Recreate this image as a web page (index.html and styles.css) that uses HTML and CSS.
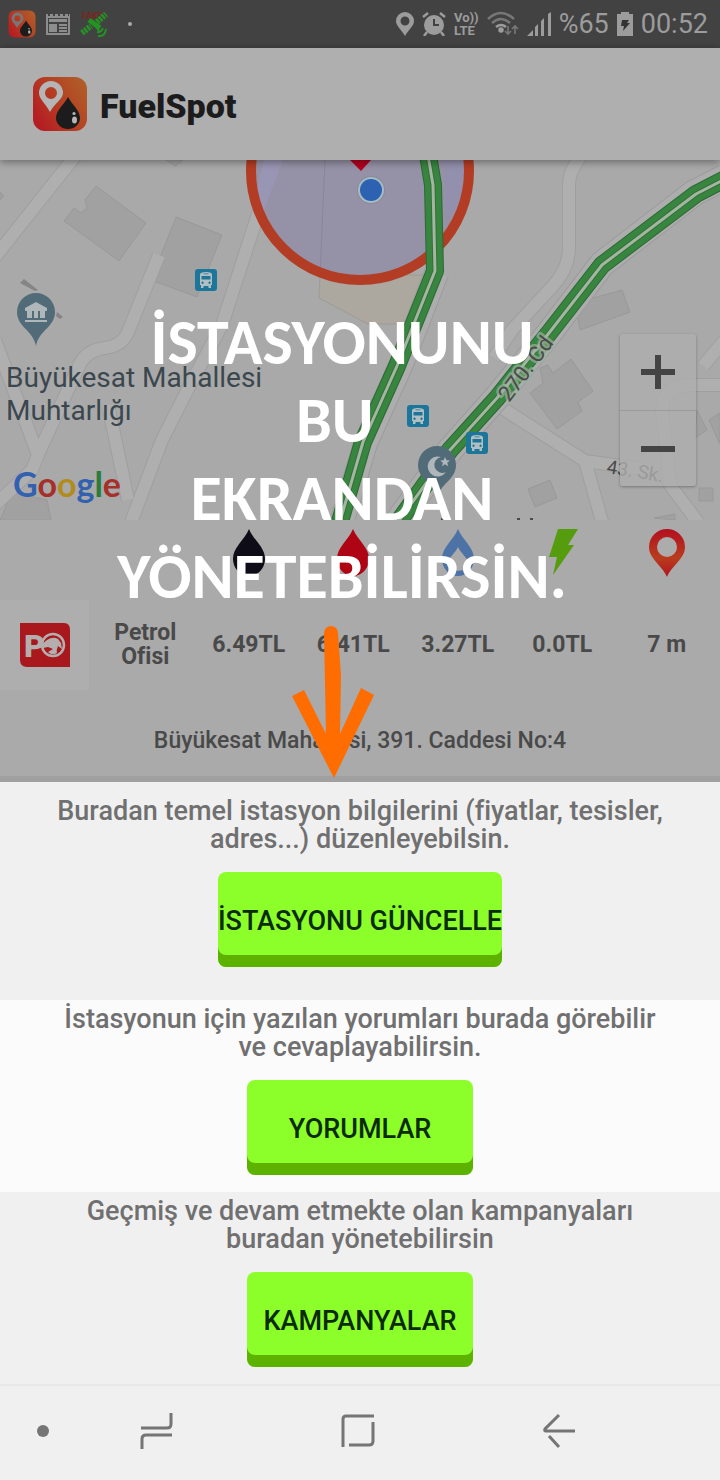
FILE: index.html
```html
<!DOCTYPE html>
<html lang="tr">
<head>
<meta charset="utf-8">
<meta name="viewport" content="width=device-width, initial-scale=1">
<title>FuelSpot</title>
<link rel="stylesheet" href="styles.css">
</head>
<body>
<svg class="defs" aria-hidden="true">
  <defs>
    <linearGradient id="logo-fill" x1="0" y1="0.7" x2="1" y2="0.1">
      <stop offset="0" stop-color="#b51d22"/><stop offset="0.55" stop-color="#b44423"/><stop offset="1" stop-color="#b0602a"/>
    </linearGradient>
    <linearGradient id="pin-fill" x1="0" y1="0" x2="0" y2="1">
      <stop offset="0" stop-color="#b30f20"/><stop offset="0.6" stop-color="#b83c1d"/><stop offset="1" stop-color="#b3141e"/>
    </linearGradient>
    <symbol id="logo" viewBox="0 0 56 56">
      <rect x="1" y="1" width="54" height="54" rx="12" fill="url(#logo-fill)"/>
      <path fill="currentColor" fill-rule="evenodd" d="M19 5a12 12 0 0 0-12 12c0 6 7 11 11 19c4-8 13-13 13-19a12 12 0 0 0-12-12zM19 11a6 6 0 1 1 0 12a6 6 0 0 1 0-12z"/>
      <path fill="#1c1c1c" d="M36 21c4 8 12 13 12 21a12 11 0 0 1-24 0c0-8 8-13 12-21z"/>
      <ellipse cx="42.500" cy="44" rx="2.500" ry="3.500" fill="#b5b5b5"/>
      <circle cx="42" cy="37.500" r="1.600" fill="#b5b5b5"/>
    </symbol>
    <symbol id="bus" viewBox="0 0 22 22">
      <rect width="22" height="22" rx="3" fill="#1c7699"/>
      <path fill="#b3bec2" fill-rule="evenodd" d="M5 5.500Q5 3 11 3Q17 3 17 5.500V16H16V19H13.500V17H8.500V19H6V16H5zM6.500 7V10.500H15.500V7zM7.500 12.500a1.200 1.200 0 1 0 .1 0zM14.500 12.500a1.200 1.200 0 1 0 .1 0zM8.500 4.500V5.300H13.500V4.500z"/>
    </symbol>
  </defs>
</svg>

<div class="screen">
  <div class="hero">
    <div class="status">
      <div class="status-left">
        <svg class="s28 status-logo"><use href="#logo"/></svg>
        <svg class="s24" viewBox="0 0 24 24" fill="#8d8d8d"><path fill-rule="evenodd" d="M0 2h2v2h2V2h3v2h2V2h3v2h2V2h3v2h2V2h3v2h1V2h1v21H0zM2 6v15h20V6z"/><path d="M3 12h8v8H3zM3 7h18v3H3zM13 12h8v2h-8zM13 15h8v2h-8zM13 18h8v2h-8z"/></svg>
        <svg class="s28" viewBox="0 0 28 28"><text x="2" y="9" font-size="9" font-weight="700" fill="#7c2620">FAKE</text><g stroke="#249323" fill="none"><path stroke-width="6" stroke-dasharray="2.500 1" d="M2 23L11 16M17 12L26 4"/><path stroke-width="5" d="M9 10L20 18"/><path stroke-width="2" d="M14 14l6 8M18 26q7 1 8-7M17 22q4 1 6-4"/></g></svg>
        <span class="more-dot"></span>
      </div>
      <div class="status-right">
        <svg class="w18" viewBox="0 0 18 24" fill="#9c9c9c"><path fill-rule="evenodd" d="M9 0a9 9 0 0 0-9 9c0 5 5 8 9 15c4-7 9-10 9-15a9 9 0 0 0-9-9zm0 4.500a4.500 4.500 0 1 1 0 9a4.500 4.500 0 0 1 0-9z"/></svg>
        <svg class="s24" viewBox="0 0 24 24"><circle cx="12" cy="13" r="10" fill="#9c9c9c"/><path d="M1 5l5-4M23 5l-5-4M5 20l-3 4M19 20l3 4" stroke="#9c9c9c" stroke-width="2.500"/><path d="M12 7v6h5" fill="none" stroke="#424242" stroke-width="2"/></svg>
        <span class="volte">Vo))<br>LTE</span>
        <svg class="wifi" viewBox="0 0 32 26" fill="none" stroke="#777" stroke-width="2.500"><path d="M1 8Q14-4 27 8M5 12Q14 4 23 12"/><path stroke="#9c9c9c" d="M9 16q5-4 10 0"/><circle cx="14" cy="19" r="1.500" fill="#9c9c9c" stroke="#9c9c9c"/><path stroke-width="1.600" d="M21 15v8m-3-3l3 3l3-3M28 23v-8m-3 3l3-3l3 3"/></svg>
        <svg class="s24" viewBox="0 0 24 24" fill="#9c9c9c"><path d="M0 24l6-6v6zM8 15l3-3v12H8zM14 9l3-3v18h-3zM21 2l3-2v24h-3z"/></svg>
        <span class="status-text">%65</span>
        <svg class="battery" viewBox="0 0 16 24"><path fill="#9c9c9c" d="M4 0h8v2h4v22H0V2h4z"/><path fill="#333" d="M5 8h7l-2 3h3l-7 8l1-5H4z"/></svg>
        <span class="status-text">00:52</span>
      </div>
    </div>

    <header class="app-bar">
      <svg class="brand-logo" role="img" aria-label="FuelSpot logo"><use href="#logo"/></svg>
      <h1 class="brand">FuelSpot</h1>
    </header>

    <div class="map">
      <svg class="map-canvas" viewBox="0 160 720 360" preserveAspectRatio="xMidYMid slice">
        <rect y="160" width="720" height="360" fill="#a9a9a9"/>
        <g fill="#a1a1a1" stroke="#999">
          <path d="M96 186L146 223L119 261L64 221L74 208L81 213L87 208L85 200zM176 217L222 235L197 297L151 280zM575 303L622 290L630 312L580 330zM540 368L548 365L553 373L571 359L593 391L578 402L582 411L557 429L530 393L543 383zM528 489L550 480L557 498L535 507zM697 410L707 430L695 438zM720 413L709 420L720 444zM699 488h14v13h-14zM654 518l21-4v6zM166 160l9 6l8-6zM0 192l4 4l-4 4zM0 520l12-28l35 8l4 20z"/>
        </g>
        <path d="M20 283l4-4l14 11l-3 1zM57 312l6 5l-3 2l-4-3z" fill="#858585"/>
        <g fill="none" stroke-linejoin="round">
          <path d="M76 155L-5 257M278 155L256 220L222 325L190 385L162 440L130 525M159 255L128 332Q122 346 105 348Q85 350 78 368L40 450L32 470L-5 505M-5 340L38 455M108 405L128 500M582 155Q569 170 569 185V250Q568 270 552 287L512 330L494 358M502 408L585 461L650 470M585 461L603 525M725 385H690Q664 386 662 408L670 485L700 525M725 340L703 366" stroke="#9f9f9f" stroke-width="14"/>
          <path d="M76 155L-5 257M278 155L256 220L222 325L190 385L162 440L130 525M159 255L128 332Q122 346 105 348Q85 350 78 368L40 450L32 470L-5 505M-5 340L38 455M108 405L128 500M582 155Q569 170 569 185V250Q568 270 552 287L512 330L494 358M502 408L585 461L650 470M585 461L603 525M725 385H690Q664 386 662 408L670 485L700 525M725 340L703 366" stroke="#afafaf" stroke-width="12"/>
        </g>
        <path d="M320 275L319 298L368 324H405L428 275z" fill="#aca79f" stroke="#9f9a94"/>
        <circle cx="360" cy="171" r="109" fill="#9591a6"/>
        <path d="M325 160L320 276" stroke="#8b8699" fill="none"/>
        <path d="M264 160L256 190L262 215L283 160z" fill="#9995b4"/>
        <path d="M444 160L447 220L460 200L466 160z" fill="#9290ad"/>
        <circle cx="360" cy="171" r="109" fill="none" stroke="#b23d24" stroke-width="10"/>
        <g fill="none" stroke-linejoin="round">
          <path d="M437 272L401 365L366 442L341 525" stroke="#9c9c9c" stroke-width="25"/>
          <path d="M437 272L401 365L366 442L341 525" stroke="#adadad" stroke-width="23"/>
          <path d="M725 177L694 193L602 264L550 332L498 396L450 450L395 525" stroke="#9c9c9c" stroke-width="27"/>
          <path d="M725 177L694 193L602 264L550 332L498 396L450 450L395 525" stroke="#adadad" stroke-width="25"/>
          <path d="M428 155L433 185L435 271L397 366L363 442L339 525M725 179L696 194L602 265L549 333L497 398L450 450L396 525" stroke="#2c6835" stroke-width="18"/>
          <path d="M428 155L433 185L435 271L397 366L363 442L339 525M725 179L696 194L602 265L549 333L497 398L450 450L396 525" stroke="#38853f" stroke-width="16"/>
          <path d="M428 155L433 185L435 271L397 366L363 442L339 525M725 179L696 194L602 265L549 333L497 398L450 450L396 525" stroke="#347039" stroke-width="5"/>
          <path d="M428 155L433 185L435 271L397 366L363 442L339 525M725 179L696 194L602 265L549 333L497 398L450 450L396 525" stroke="#a4b5a2" stroke-width="3"/>
        </g>
        <path d="M350 160H371L361 171z" fill="#b3001f"/>
        <circle cx="371" cy="190" r="14" fill="#8b899b"/>
        <circle cx="371" cy="190" r="13" fill="#a6bcc4"/>
        <circle cx="371" cy="190" r="11" fill="#2d62b3"/>
        <use href="#bus" x="195" y="269" width="22" height="22"/>
        <use href="#bus" x="407" y="405" width="22" height="22"/>
        <use href="#bus" x="466" y="432" width="22" height="22"/>
        <path fill="#526b78" d="M36 293a19 19 0 0 0-19 19c0 15 16 18 19 34c3-16 19-19 19-34a19 19 0 0 0-19-19z"/>
        <path fill="#b0b7ba" d="M25 308L36 302L47 308V311H45V318H40V311H38V318H34V311H32V318H27V311H25zM25 320h22v2H25z"/>
        <path fill="#526b78" d="M437 446a19 19 0 0 0-19 19c0 15 16 18 19 34c3-16 19-19 19-34a19 19 0 0 0-19-19z"/>
        <path fill="#b0b7ba" d="M441 457a10 10 0 1 0 5 15a8 8 0 1 1-5-15zM445 457l1.500 3.300l3.500.2l-2.800 2.300l1 3.400l-3.200-1.900l-3 1.900l.9-3.400l-2.700-2.300l3.400-.2z"/>
        <path d="M441 518h3v2h-3zM455 518h4v2h-4zM517 518h3v2h-3zM530 518h3v2h-3z" fill="#4a4a4a"/>
        <g class="map-label">
          <text x="6" y="387" font-size="28">Büyükesat Mahallesi</text>
          <text x="6" y="420" font-size="28">Muhtarlığı</text>
          <text class="street halo" transform="translate(509 403) rotate(-53)" font-size="22">270. Cd</text>
          <text class="street" transform="translate(606 473) rotate(9)" font-size="19">43. Sk.</text>
        </g>
        <text class="google" x="13" y="497" font-size="34"><tspan fill="#3261af">G</tspan><tspan fill="#a5302a">o</tspan><tspan fill="#b08c1c">o</tspan><tspan fill="#3261af">g</tspan><tspan fill="#2b7b3c">l</tspan><tspan fill="#a5302a">e</tspan></text>
      </svg>
      <div class="zoom">
        <button class="zoom-btn" type="button" aria-label="Yakınlaştır"><svg class="zoom-icon" viewBox="0 0 34 34"><path d="M0 17h34M17 0v34"/></svg></button>
        <button class="zoom-btn" type="button" aria-label="Uzaklaştır"><svg class="zoom-icon" viewBox="0 0 34 34"><path d="M0 17h34"/></svg></button>
      </div>
    </div>

    <section class="station">
      <table class="prices">
        <colgroup><col class="col-logo"><col><col><col><col><col><col></colgroup>
        <thead>
          <tr>
            <td></td><td></td>
            <th scope="col" aria-label="Benzin"><svg class="fuel" viewBox="0 0 48 48"><path fill="#0d0c17" d="M24 0c5 12 16 18 16 30a16 17 0 0 1-32 0c0-12 11-18 16-30z"/></svg></th>
            <th scope="col" aria-label="Dizel"><svg class="fuel" viewBox="0 0 48 48"><path fill="#af0414" d="M24 0c5 12 16 18 16 30a16 17 0 0 1-32 0c0-12 11-18 16-30z"/></svg></th>
            <th scope="col" aria-label="LPG"><svg class="fuel" viewBox="0 0 48 48"><path fill="#4c72a6" fill-rule="evenodd" d="M24 0c5 12 16 18 16 30a16 17 0 0 1-32 0c0-12 11-18 16-30zM24 18c-3 7-11 11-11 19a12 8 0 0 0 22 0c0-8-8-12-11-19z"/></svg></th>
            <th scope="col" aria-label="Elektrik"><svg class="fuel" viewBox="0 0 48 48"><path fill="#559c0f" d="M20 0H40L30 16H36L15 46L19 28H11z"/></svg></th>
            <th scope="col" aria-label="Mesafe"><svg class="fuel" viewBox="0 0 48 48"><path fill="url(#pin-fill)" d="M24 0a18 18 0 0 0-18 18c0 12 13 18 18 30c5-12 18-18 18-30a18 18 0 0 0-18-18z"/><circle cx="24" cy="18" r="10" fill="#acacac"/></svg></th>
          </tr>
        </thead>
        <tbody>
          <tr>
            <td class="brand-cell"><div class="brand-box"><svg class="po" viewBox="0 0 50 44" role="img" aria-label="PO"><path fill="#a9181d" d="M0 0H44Q50 0 50 7V44H7Q0 44 0 37z"/><text x="4" y="34" font-size="32" font-weight="900" fill="#b4aeae">P</text><circle cx="33" cy="22" r="11" fill="#a9181d" stroke="#b4aeae" stroke-width="2.500"/><path fill="#b4aeae" d="M21 22L27 17Q33 13 38 16L41 20L42 26L38 23Q36 27 37 30Q32 33 28 29L33 26L28 24L23 25z"/></svg></div></td>
            <td class="name">Petrol Ofisi</td><td>6.49TL</td><td>6.41TL</td><td>3.27TL</td><td>0.0TL</td><td>7 m</td>
          </tr>
        </tbody>
      </table>
      <p class="address">Büyükesat Mahallesi, 391. Caddesi No:4</p>
    </section>

    <div class="coach">
      <p class="coach-text">İSTASYONUNU<br>BU&nbsp;<br>EKRANDAN<br>YÖNETEBİLİRSİN.</p>
      <svg class="coach-arrow" viewBox="292 626 100 152"><path fill="#ff6c00" d="M292 696L304 690L326 734L324 633A7 7 0 0 1 338 633L341 676L340 734L361 688L374 695L334 778z"/></svg>
    </div>
  </div>

  <main class="actions">
    <section class="action first">
      <p class="hint">Buradan temel istasyon bilgilerini (fiyatlar, tesisler, adres...) düzenleyebilsin.</p>
      <button class="btn wide" type="button">İSTASYONU GÜNCELLE</button>
    </section>
    <section class="action light">
      <p class="hint">İstasyonun için yazılan yorumları burada görebilir ve cevaplayabilirsin.</p>
      <button class="btn" type="button">YORUMLAR</button>
    </section>
    <section class="action">
      <p class="hint">Geçmiş ve devam etmekte olan kampanyaları buradan yönetebilirsin</p>
      <button class="btn" type="button">KAMPANYALAR</button>
    </section>
  </main>

  <nav class="nav">
    <span class="nav-dot"></span>
    <button class="nav-btn" type="button" aria-label="Son uygulamalar"><svg class="nav-icon" viewBox="0 0 36 36"><path d="M2 15H28Q32 15 32 11V0M33 22H7Q3 22 3 26V36"/></svg></button>
    <button class="nav-btn" type="button" aria-label="Ana ekran"><svg class="nav-icon" viewBox="0 0 36 36"><path d="M3 34V6Q3 3 6 3H34M9 32H29Q33 32 33 28V9"/></svg></button>
    <button class="nav-btn" type="button" aria-label="Geri"><svg class="nav-icon" viewBox="0 0 36 36"><path d="M18 2L4 16Q3 18 5 18H34M8 23L18 34"/></svg></button>
  </nav>
</div>
</body>
</html>
```

FILE: styles.css
```css
* { box-sizing: border-box; }
body { margin: 0; background: #f0f0f0; font-family: Roboto, "Noto Sans", sans-serif; }
p, h1 { margin: 0; }
svg { display: block; flex: none; }
button { border: 0; padding: 0; font: inherit; background: none; cursor: pointer; }
.defs { position: absolute; width: 0; height: 0; }
.screen { display: flex; flex-direction: column; min-height: 100vh; }
.hero { position: relative; background: #aaa; }

.status { display: flex; justify-content: space-between; align-items: center; height: 48px; padding: 0 12px 0 8px; background: #424242; color: #9c9c9c; }
.status-left { display: flex; align-items: center; gap: 10px; }
.status-right { display: flex; align-items: center; gap: 8px; }
.s28 { width: 28px; height: 28px; }
.s24 { width: 24px; height: 24px; }
.w18 { width: 18px; height: 24px; }
.wifi { width: 32px; height: 26px; }
.battery { width: 16px; height: 24px; }
.status-logo { color: #777; }
.more-dot { width: 4px; height: 4px; margin-left: 10px; border-radius: 50%; background: #aaa; }
.volte { font-size: 13px; line-height: 13px; font-weight: 700; }
.status-text { font-size: 27px; line-height: 48px; }

.app-bar { position: relative; display: flex; align-items: center; gap: 12px; height: 112px; padding: 0 32px; background: #afafaf; box-shadow: 0 2px 8px rgba(0, 0, 0, 0.4); z-index: 1; }
.brand-logo { width: 56px; height: 56px; color: #b5b5b5; }
.brand { padding-top: 4px; font-size: 34px; line-height: 40px; font-weight: 900; color: #1c1c1c; }

.map { position: relative; }
.map-canvas { width: 100%; height: 360px; }
.map-label { fill: #3b474e; }
.street { fill: #4a4a4a; }
.halo { paint-order: stroke; stroke: rgba(160, 178, 160, 0.7); stroke-width: 5px; stroke-linejoin: round; }
.google { font-family: Lato, sans-serif; font-weight: 700; }
.zoom { position: absolute; right: 24px; bottom: 34px; display: flex; flex-direction: column; width: 76px; border-radius: 3px; background: rgba(174, 174, 174, 0.8); box-shadow: 0 1px 3px rgba(0, 0, 0, 0.3); }
.zoom-btn { display: flex; align-items: center; justify-content: center; height: 76px; }
.zoom-btn + .zoom-btn { border-top: 1px solid #9b9b9b; }
.zoom-icon { width: 34px; height: 34px; stroke: #444; stroke-width: 6; }

.station { border-bottom: 6px solid #a0a0a0; }
.prices { width: 100%; table-layout: fixed; border-collapse: collapse; font-size: 23px; line-height: 24px; font-weight: 700; color: #494949; text-align: center; }
.col-logo { width: 93px; }
.prices th, .prices td { padding: 0 2px 0 0; }
.prices thead tr { height: 80px; vertical-align: top; }
.prices tbody tr { height: 90px; }
.fuel { width: 48px; height: 48px; margin: 9px auto 0; }
.brand-box { display: flex; align-items: center; justify-content: center; width: 89px; height: 90px; background: #aeaeae; }
.po { width: 50px; height: 44px; }
.prices tbody .brand-cell { padding: 0; }
.prices tbody .name { padding: 0 12px; }
.address { padding: 37px 16px 21px; font-size: 23px; line-height: 28px; font-weight: 500; color: #494949; text-align: center; }

.coach { position: absolute; top: 303px; left: 0; right: 0; display: flex; flex-direction: column; align-items: center; gap: 11px; padding-right: 36px; pointer-events: none; z-index: 2; }
.coach-text { font-family: Carlito, Lato, "Noto Sans", sans-serif; font-size: 64px; line-height: 78px; font-weight: 700; color: #fff; text-align: center; }
.coach-arrow { width: 100px; height: 152px; }

.action { display: flex; flex-direction: column; align-items: center; gap: 19px; padding: 5px 48px 17px; background: #f0f0f0; }
.action.first { padding: 15px 48px 33px; }
.action.light { background: #fbfbfb; }
.hint { max-width: 624px; font-size: 27px; line-height: 28px; font-weight: 500; color: #707070; text-align: center; }
.btn { min-width: 226px; height: 95px; padding-top: 2px; border-radius: 8px; background: #8cff2a; box-shadow: inset 0 -12px 0 #5db200; color: #0b2a06; font-size: 27px; font-weight: 500; }
.btn.wide { min-width: 283px; }

.nav { display: grid; grid-template-columns: 56px 1fr 1fr 1fr 60px; align-items: center; flex: 1; min-height: 96px; padding-bottom: 4px; border-top: 2px solid #e9e9e9; }
.nav-dot { justify-self: end; width: 12px; height: 12px; margin-right: 7px; border-radius: 50%; background: #757575; }
.nav-btn { display: flex; justify-content: center; }
.nav-icon { width: 36px; height: 36px; fill: none; stroke: #757575; stroke-width: 3; }
```
